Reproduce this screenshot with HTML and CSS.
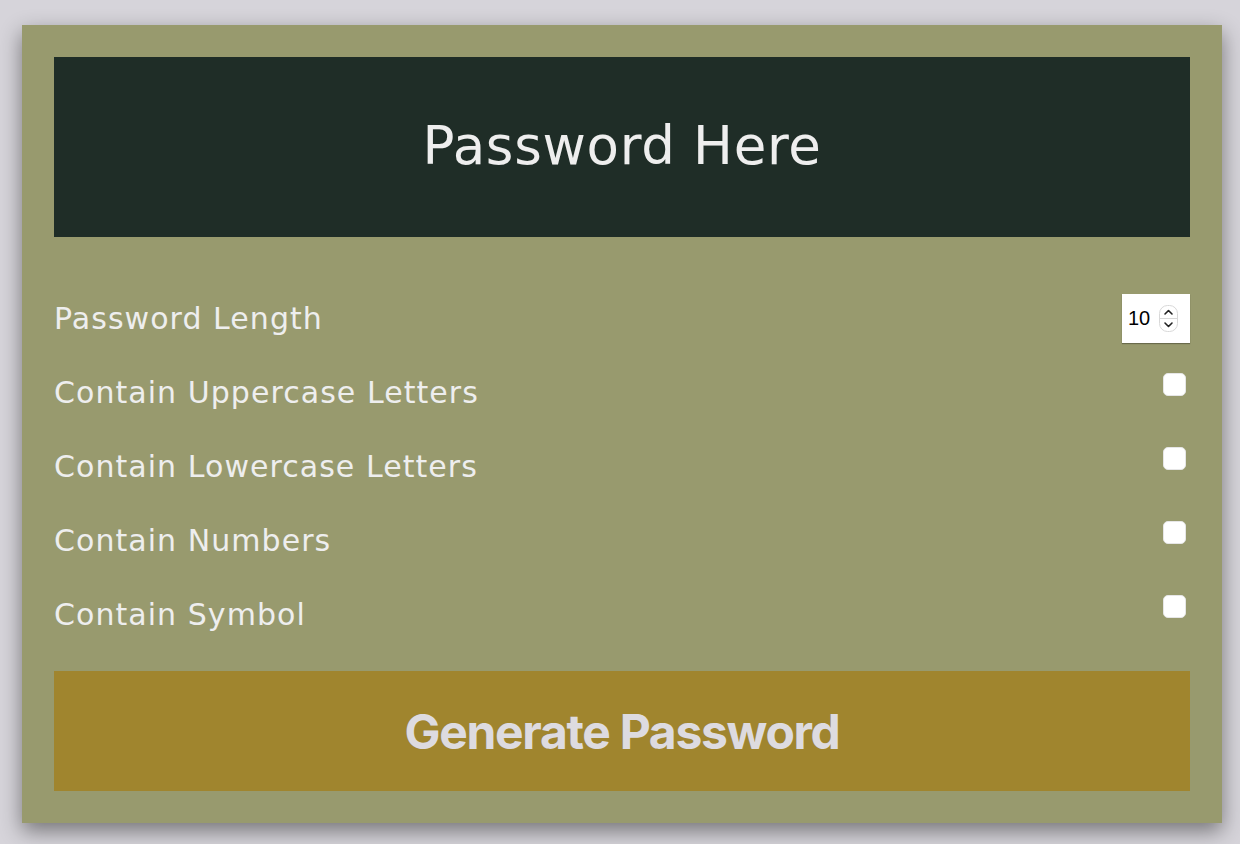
FILE: index.html
```html
<!DOCTYPE html>
<html lang="en">
<head>
<meta charset="utf-8">
<title>Password Generator</title>
<link rel="stylesheet" href="styles.css">
</head>
<body>
  <div class="card">
    <div class="result">Password Here</div>
    <div class="settings">
      <div class="setting">
        <label class="label">Password Length</label>
        <div class="numbox">
          <span class="numval">10</span>
          <svg class="spin" width="19" height="27" viewBox="0 0 19 27">
            <rect x="0.5" y="0.5" width="18" height="26" rx="8" fill="#fff" stroke="#d8d8d8"/>
            <line x1="1" y1="13.5" x2="18" y2="13.5" stroke="#d8d8d8"/>
            <path d="M6 9 L9.5 5.5 L13 9" fill="none" stroke="#222" stroke-width="1.6" stroke-linecap="round" stroke-linejoin="round"/>
            <path d="M6 18 L9.5 21.5 L13 18" fill="none" stroke="#222" stroke-width="1.6" stroke-linecap="round" stroke-linejoin="round"/>
          </svg>
        </div>
      </div>
      <div class="setting">
        <label class="label">Contain Uppercase Letters</label>
        <input type="checkbox" class="check">
      </div>
      <div class="setting">
        <label class="label">Contain Lowercase Letters</label>
        <input type="checkbox" class="check">
      </div>
      <div class="setting">
        <label class="label">Contain Numbers</label>
        <input type="checkbox" class="check">
      </div>
      <div class="setting">
        <label class="label">Contain Symbol</label>
        <input type="checkbox" class="check">
      </div>
    </div>
    <button class="generate">Generate Password</button>
  </div>
</body>
</html>
```
FILE: styles.css
```css
* { box-sizing: border-box; }
html, body { margin: 0; padding: 0; }
html { background: #d6d4da; }
body {
  background: #d6d4da;
  padding-top: 25px;
  min-height: 844px;
  font-family: "DejaVu Sans", "Noto Sans", sans-serif;
}
.card {
  width: 1200px;
  height: 798px;
  margin-left: 22px;
  background: #989a6e;
  padding: 32px;
  box-shadow: 0 8px 20px rgba(0, 0, 0, 0.45);
}
.result {
  height: 180px;
  background: #1f2d27;
  color: #eeeeee;
  display: flex;
  align-items: center;
  justify-content: center;
  font-size: 53px;
  letter-spacing: 0.7px;
  font-weight: 400;
  padding-bottom: 4px;
}
.settings {
  padding-top: 44px;
}
.setting {
  height: 74px;
  display: flex;
  align-items: center;
  justify-content: space-between;
}
.label {
  color: #eeeeee;
  font-size: 30px;
  letter-spacing: 1.05px;
}
.numbox {
  width: 68px;
  height: 49px;
  background: #fff;
  display: flex;
  align-items: center;
  padding-left: 6px;
  gap: 9px;
  box-shadow: 0 1px 1px rgba(0, 0, 0, 0.3);
}
.numval {
  font-family: "Liberation Sans", Arial, sans-serif;
  font-size: 20px;
  color: #000;
}
.check {
  appearance: none;
  -webkit-appearance: none;
  width: 23px;
  height: 23px;
  margin: 0 4px 16px 0;
  background: #fff;
  border: 1px solid #e6e6e6;
  border-radius: 5px;
}
.generate {
  display: block;
  width: 100%;
  height: 120px;
  margin-top: 20px;
  border: none;
  background: #a0852e;
  color: #dddbe0;
  font-family: Inter, "Liberation Sans", sans-serif;
  font-weight: 700;
  font-size: 48px;
  letter-spacing: -1.3px;
  cursor: pointer;
}
```
